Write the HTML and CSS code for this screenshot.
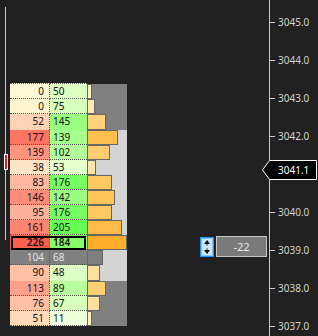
FILE: index.html
```html
<!DOCTYPE html>
<html>
<head>
<meta charset="utf-8">
<link rel="stylesheet" href="styles.css">
</head>
<body>
<div class="chart">
  <div class="scroll">
    <div class="track t1"></div>
    <div class="thumb"></div>
    <div class="track t2"></div>
  </div>

  <div class="ladder">
    <div class="row first">
      <div class="ask" style="background:#fff8d4">0</div>
      <div class="bid" style="background:#ddffc4">50</div>
      <div class="hist dark"><div class="bar" style="width:5px;background:#fff3c4"></div></div>
    </div>
    <div class="row">
      <div class="ask" style="background:#fff6d0">0</div>
      <div class="bid" style="background:#d6ffbc">75</div>
      <div class="hist dark"><div class="bar" style="width:8px;background:#ffeab0"></div></div>
    </div>
    <div class="row sep">
      <div class="ask" style="background:#ffd2b4">52</div>
      <div class="bid" style="background:#98ff80">145</div>
      <div class="hist dark"><div class="bar" style="width:19px;background:#ffd27a"></div></div>
    </div>
    <div class="row">
      <div class="ask" style="background:#ff7562">177</div>
      <div class="bid" style="background:#a6ff8c">139</div>
      <div class="hist light"><div class="bar" style="width:31px;background:#ffc050"></div></div>
    </div>
    <div class="row">
      <div class="ask" style="background:#ff957f">139</div>
      <div class="bid" style="background:#b4ff9c">102</div>
      <div class="hist light"><div class="bar" style="width:23px;background:#ffcc70"></div></div>
    </div>
    <div class="row">
      <div class="ask" style="background:#ffe4c8">38</div>
      <div class="bid" style="background:#e4ffcc">53</div>
      <div class="hist light"><div class="bar" style="width:9px;background:#ffe6a8"></div></div>
    </div>
    <div class="row">
      <div class="ask" style="background:#ffb8a0">83</div>
      <div class="bid" style="background:#76ff62">176</div>
      <div class="hist light"><div class="bar" style="width:25px;background:#ffc860"></div></div>
    </div>
    <div class="row">
      <div class="ask" style="background:#ff8c78">146</div>
      <div class="bid" style="background:#9cff84">142</div>
      <div class="hist light"><div class="bar" style="width:28px;background:#ffc55a"></div></div>
    </div>
    <div class="row">
      <div class="ask" style="background:#ffb098">95</div>
      <div class="bid" style="background:#76ff62">176</div>
      <div class="hist light"><div class="bar" style="width:25px;background:#ffc860"></div></div>
    </div>
    <div class="row">
      <div class="ask" style="background:#ff8472">161</div>
      <div class="bid" style="background:#66ff54">205</div>
      <div class="hist light"><div class="bar" style="width:35px;background:#ffbb48"></div></div>
    </div>
    <div class="row cur">
      <div class="ask" style="background:#ff5f4f">226</div>
      <div class="bid" style="background:#86ff68">184</div>
      <div class="hist light"><div class="bar" style="width:40px;background:#ffad2a"></div></div>
    </div>
    <div class="row last">
      <div class="ask">104</div>
      <div class="bid">68</div>
      <div class="hist light"><div class="bar grey" style="width:16px"></div></div>
    </div>
    <div class="row sep">
      <div class="ask" style="background:#ffc0a4">90</div>
      <div class="bid" style="background:#dcffc4">48</div>
      <div class="hist light"><div class="bar" style="width:13px;background:#ffe0a0"></div></div>
    </div>
    <div class="row">
      <div class="ask" style="background:#ffa08a">113</div>
      <div class="bid" style="background:#b8ff9e">89</div>
      <div class="hist dark"><div class="bar" style="width:19px;background:#ffd070"></div></div>
    </div>
    <div class="row">
      <div class="ask" style="background:#ffc0a4">76</div>
      <div class="bid" style="background:#d6ffbc">67</div>
      <div class="hist dark"><div class="bar" style="width:13px;background:#ffe0a0"></div></div>
    </div>
    <div class="row">
      <div class="ask" style="background:#ffd9b8">51</div>
      <div class="bid" style="background:#f0ffdc">11</div>
      <div class="hist dark"><div class="bar" style="width:5px;background:#fff0c0"></div></div>
    </div>
  </div>

  <div class="middle">
    <svg class="spin" width="14" height="20" viewBox="0 0 14 20">
      <rect x="0.5" y="0.5" width="13" height="19" fill="#cce6fa" stroke="#1e90ff"/>
      <rect x="1.5" y="1.5" width="11" height="17" fill="none" stroke="#8cc8f5"/>
      <polygon points="7,3 10,7 4,7" fill="#111"/>
      <polygon points="7,17 10,13 4,13" fill="#111"/>
      <rect x="6.5" y="7" width="1" height="1.5" fill="#111"/>
      <rect x="6.5" y="11.5" width="1" height="1.5" fill="#111"/>
    </svg>
    <div class="qty">-22</div>
  </div>

  <div class="axis">
    <div class="tick"><span>3045.0</span></div>
    <div class="tick"><span>3044.0</span></div>
    <div class="tick"><span>3043.0</span></div>
    <div class="tick"><span>3042.0</span></div>
    <div class="tick"><span></span></div>
    <div class="tick"><span>3040.0</span></div>
    <div class="tick"><span>3039.0</span></div>
    <div class="tick"><span>3038.0</span></div>
    <div class="tick"><span>3037.0</span></div>
    <div class="marker">
      <svg width="57" height="22" viewBox="0 0 57 22">
        <polygon points="1.5,11 8.5,1.5 55.5,1.5 55.5,20.5 8.5,20.5" fill="#000" stroke="#fff" stroke-width="1"/>
      </svg>
      <span class="mval">3041.1</span>
    </div>
  </div>
</div>
</body>
</html>
```

FILE: styles.css
```css
html, body {
  margin: 0;
  padding: 0;
}
body {
  background: #212121;
  width: 318px;
  height: 336px;
  overflow: hidden;
  font-family: "Noto Sans", "Open Sans", sans-serif;
  font-size: 10px;
}
.chart {
  display: flex;
  height: 336px;
}

/* left scroll strip */
.scroll {
  width: 10px;
  flex: none;
  box-sizing: border-box;
  padding: 7px 0 0 5px;
  display: flex;
  flex-direction: column;
}
.track {
  width: 1px;
  background: #cfcfcf;
}
.t1 { height: 147px; }
.t2 { height: 70px; }
.thumb {
  width: 2px;
  height: 14px;
  margin-left: -1px;
  background: #e0201c;
  border: 1px solid #ffffff;
}

/* ladder */
.ladder {
  width: 117px;
  flex: none;
  margin-top: 83px;
  align-self: flex-start;
}
.row {
  display: grid;
  grid-template-columns: 40px 37px 40px;
  height: 15px;
}
.row.first { height: 16px; }
.row.sep { height: 16px; }
.ask, .bid {
  box-sizing: border-box;
  grid-row: 1;
  border-bottom: 1px dotted #555555;
  color: #111111;
  line-height: 14px;
  white-space: nowrap;
}
.row.first .ask, .row.first .bid {
  border-top: 1px dotted #5a5a5a;
}
.ask {
  grid-column: 1;
  text-align: right;
  padding-right: 5px;
  border-right: 1px dotted #555555;
}
.bid {
  grid-column: 2;
  padding-left: 3px;
}
.row.sep .ask, .row.sep .bid {
  border-bottom: none;
  background-image: repeating-linear-gradient(90deg, #5e5e5e 0 3px, transparent 3px 5px);
  background-size: 100% 2px;
  background-position: left bottom;
  background-repeat: no-repeat;
}
.row.last .ask, .row.last .bid {
  background: #808080;
  color: #e4e4e4;
}
.row.cur .ask, .row.cur .bid {
  font-weight: 600;
}
.row.cur::after {
  content: "";
  grid-row: 1;
  grid-column: 1 / 3;
  border: 2px solid #000000;
  margin: 1px 1px 0 1px;
}
.hist {
  grid-row: 1;
  grid-column: 3;
  display: flex;
}
.row.first .hist { margin-top: 1px; }
.hist.dark { background: #808080; }
.hist.light { background: #d4d4d4; }
.bar {
  box-sizing: border-box;
  border: 1px solid #666666;
  height: 100%;
}
.bar.grey { background: #808080; }

/* middle */
.middle {
  flex: 1;
  display: flex;
  align-items: flex-start;
  gap: 2px;
  padding: 236px 0 0 73px;
}
.spin {
  display: block;
  margin-top: 1px;
  flex: none;
}
.qty {
  width: 51px;
  height: 21px;
  flex: none;
  box-sizing: border-box;
  border: 1px solid #c8c8c8;
  background: #7a7a7a;
  color: #e6e6e6;
  font-size: 11px;
  line-height: 19px;
  text-align: center;
}

/* price axis */
.axis {
  width: 49px;
  flex: none;
  box-sizing: border-box;
  border-left: 1px solid #c8c8c8;
  padding-top: 3px;
  position: relative;
}
.tick {
  height: 38px;
  display: flex;
  align-items: center;
  gap: 3px;
  color: #d2d2d2;
  white-space: nowrap;
}
.tick::before {
  content: "";
  width: 5px;
  height: 1px;
  background: #c8c8c8;
  flex: none;
}
.marker {
  position: absolute;
  left: -9px;
  top: 159px;
  width: 57px;
  height: 22px;
}
.marker svg {
  display: block;
}
.mval {
  position: absolute;
  left: 17px;
  top: 1px;
  line-height: 20px;
  color: #ffffff;
  white-space: nowrap;
}
```
